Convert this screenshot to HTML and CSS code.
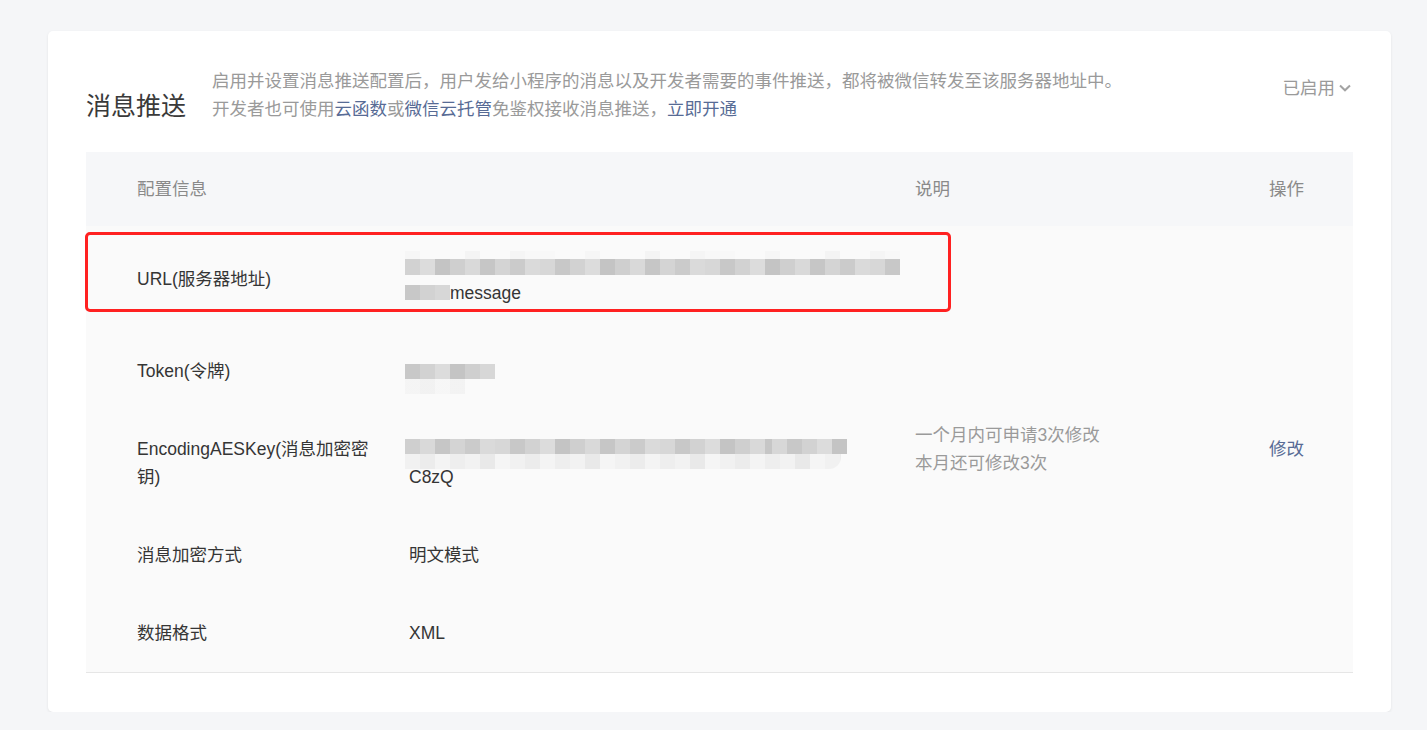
FILE: index.html
```html
<!DOCTYPE html>
<html>
    <head>
        <meta charset="utf-8">
        <title>消息推送</title>
        <link rel="stylesheet" href="styles.css">
    </head>
    <body>
        <div class="card">
            <div class="head">
                <h2 class="title">消息推送</h2>
                <div class="intro">
                    <p>启用并设置消息推送配置后，用户发给小程序的消息以及开发者需要的事件推送，都将被微信转发至该服务器地址中。</p>
                    <p>开发者也可使用<a href="">云函数</a>或<a href="">微信云托管</a>免鉴权接收消息推送，<a href="">立即开通</a></p>
                </div>
                <div class="status">
                    已启用
                    <svg width="12" height="8" viewBox="0 0 12 8"><path d="M1 1.5 L6 6.3 L11 1.5" fill="none" stroke="#a3a3a3" stroke-width="2"/></svg>
                </div>
            </div>

            <div class="table">
                <div class="row thead">
                    <div class="c1">配置信息</div>
                    <div class="c2"></div>
                    <div class="c3">说明</div>
                    <div class="c4">操作</div>
                </div>

                <div class="row url">
                    <div class="c1">URL(服务器地址)</div>
                    <div class="c2">
                        <div class="line">
                            <div class="mos faint url-faint"></div>
                            <div class="mos url-dark"></div>
                        </div>
                        <div class="line"><span class="mos inl"></span>message</div>
                    </div>
                    <div class="c3"></div>
                    <div class="c4"></div>
                    <!-- 标注框 压在表格上面 -->
                    <div class="mark"></div>
                </div>

                <div class="row">
                    <div class="c1">Token(令牌)</div>
                    <div class="c2">
                        <div class="line token-line">
                            <div class="mos token-dark"></div>
                            <div class="mos light token-light"></div>
                        </div>
                    </div>
                    <div class="c3"></div>
                    <div class="c4"></div>
                </div>

                <div class="row">
                    <div class="c1">EncodingAESKey(消息加密密钥)</div>
                    <div class="c2">
                        <div class="line key-line">
                            <div class="mos key-dark"></div>
                            <div class="mos light key-light"></div>
                        </div>
                        <div class="line">C8zQ</div>
                    </div>
                    <div class="c3 note lift">一个月内可申请3次修改<br>本月还可修改3次</div>
                    <div class="c4 op lift"><a href="">修改</a></div>
                </div>

                <div class="row">
                    <div class="c1">消息加密方式</div>
                    <div class="c2">明文模式</div>
                    <div class="c3"></div>
                    <div class="c4"></div>
                </div>

                <div class="row">
                    <div class="c1">数据格式</div>
                    <div class="c2">XML</div>
                    <div class="c3"></div>
                    <div class="c4"></div>
                </div>
            </div>
        </div>
    </body>
</html>
```

FILE: styles.css
```css
*{
    margin: 0;
    padding: 0;
    box-sizing: border-box;
}
body{
    background: #f5f6f8;
    font-family: "Liberation Sans", "Noto Sans CJK SC", sans-serif;
    font-size: 17.5px;
    color: #353535;
}
a{
    color: #576b95;
    text-decoration: none;
}

.card{
    width: 1343px;
    margin: 31px 0 0 48px;
    padding: 36px 38px 39px;
    background: #fff;
    border-radius: 5px;
    box-shadow: 0 1px 3px rgba(0, 0, 0, 0.08);
}

/* 头部: 标题 + 说明 + 状态 */
.head{
    display: flex;
    align-items: flex-end;
    height: 56px;
}
.title{
    font-size: 25px;
    font-weight: 400;
    line-height: 34px;
    color: #3a3a3a;
}
.intro{
    margin-left: 26px;
    color: #9a9a9a;
    line-height: 28px;
    white-space: nowrap;
}
.status{
    margin-left: auto;
    margin-right: 2px;
    align-self: flex-start;
    padding-top: 7px;
    line-height: 28px;
    color: #9a9a9a;
    display: flex;
    align-items: center;
    gap: 4px;
}

/* 表格 */
.table{
    margin-top: 29px;
    background: #fafafa;
    border-bottom: 1px solid #e6e6e6;
}
.row{
    display: grid;
    grid-template-columns: 319px 510px 354px 1fr;
    align-items: center;
    padding: 25px 0;
    line-height: 28px;
}
.thead{
    background: #f6f7f9;
    padding: 23px 0;
    color: #8a8a8a;
}
.c1{
    padding-left: 51px;
    padding-right: 28px;
}
.c2{
    padding-left: 4px;
}
.note{
    color: #9a9a9a;
}
/* 说明和操作比左边两列靠上一点 */
.lift{
    margin-top: -28px;
}

.url{
    position: relative;
}
.mark{
    position: absolute;
    left: -1px;
    top: 6px;
    width: 866px;
    height: 80px;
    border: 3px solid #ff2121;
    border-radius: 5px;
}

/* 打码的马赛克 */
.line{
    height: 28px;
}
.mos{
    height: 15px;
    margin-left: -4px;
    background: repeating-linear-gradient(90deg,
        #d7d7d7 0 15px, #c8c8c8 15px 30px, #d2d2d2 30px 45px, #dcdcdc 45px 60px,
        #c4c4c4 60px 75px, #cfcfcf 75px 90px, #d9d9d9 90px 105px, #c6c6c6 105px 120px,
        #d4d4d4 120px 135px, #cbcbcb 135px 150px, #dadada 150px 165px);
}
.mos.light{
    background: repeating-linear-gradient(90deg,
        #f1f1f1 0 15px, #ececec 15px 30px, #f4f4f4 30px 45px, #eeeeee 45px 60px,
        #f2f2f2 60px 75px, #e9e9e9 75px 90px, #f5f5f5 90px 105px);
}
.mos.faint{
    background: repeating-linear-gradient(90deg,
        #f6f6f6 0 15px, #fafafa 15px 60px, #f4f4f4 60px 75px, #fafafa 75px 105px,
        #f5f5f5 105px 120px, #f8f8f8 120px 150px, #fafafa 150px 180px);
}
.url-faint{
    width: 495px;
    height: 8px;
}
.url-dark{
    width: 495px;
    height: 16px;
    background-position: -30px 0;
}
.inl{
    display: inline-block;
    width: 45px;
    vertical-align: -1px;
    background-position: -60px 0;
}
.token-line{
    padding-top: 7px;
}
.token-dark{
    width: 90px;
    background-position: -15px 0;
}
.token-light{
    width: 60px;
    opacity: 0.6;
}
.key-line{
    padding-top: 4px;
}
.key-dark{
    width: 442px;
    background-position: -75px 0;
}
.key-light{
    width: 436px;
    border-bottom-right-radius: 12px;
}
```
